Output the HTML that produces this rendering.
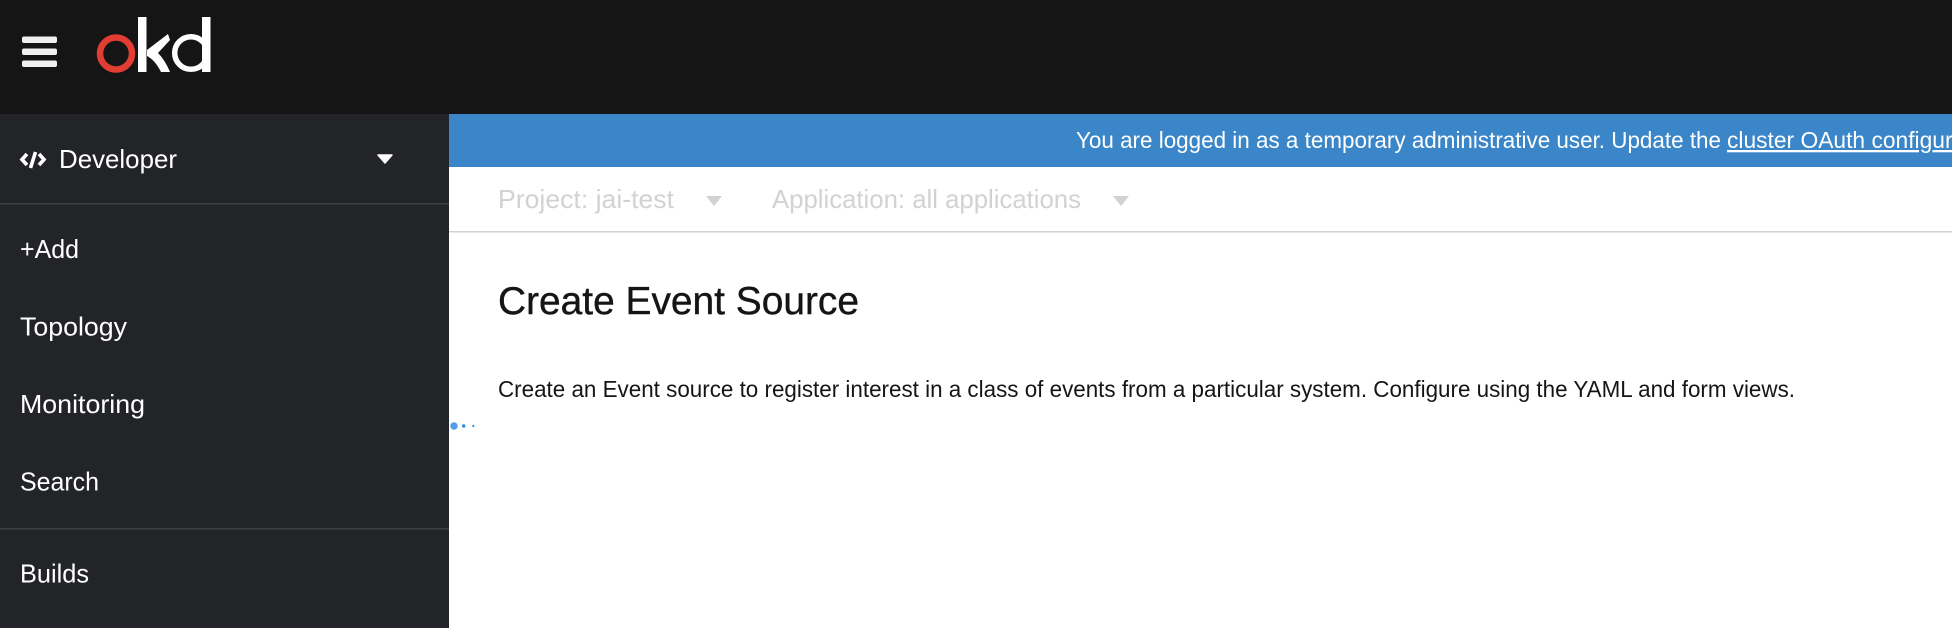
<!DOCTYPE html>
<html lang="en">
<head>
<meta charset="utf-8">
<title>Create Event Source</title>
<style>
html,body{margin:0;padding:0;width:1952px;height:628px;overflow:hidden;background:#fff}
svg{display:block;filter:blur(.35px)}
text{font-family:"Liberation Sans",sans-serif}
.s{font-size:26px;fill:#fff}
.n{font-size:26px;fill:#d2d2d2}
.b{font-size:23px;fill:#fff}
</style>
</head>
<body>
<svg xmlns="http://www.w3.org/2000/svg" width="1952" height="628" viewBox="0 0 1952 628">
  <rect width="1952" height="628" fill="#fff"/>
  <rect width="1952" height="114" fill="#151515"/>
  <rect y="114" width="449" height="514" fill="#232428"/>
  <rect x="449" y="114" width="1503" height="53" fill="#3a86c8"/>
  <rect x="449" y="231" width="1503" height="1.5" fill="#d2d2d2"/>
  <rect y="203" width="449" height="1.5" fill="#3c3f42"/>
  <rect y="528" width="449" height="1.5" fill="#3c3f42"/>

  <!-- hamburger -->
  <g fill="#f0f0f0">
    <rect x="22" y="36.500" width="35" height="6.500" rx="2"/>
    <rect x="22" y="48.500" width="35" height="6.500" rx="2"/>
    <rect x="22" y="60.500" width="35" height="6.500" rx="2"/>
  </g>

  <!-- logo -->
  <circle cx="116" cy="53.500" r="16" fill="none" stroke="#e23d33" stroke-width="6.500"/>
  <rect x="138" y="17" width="8.500" height="55" fill="#fff"/>
  <path d="M147 50 L168 34 L170 40 L158 53 Q165 60 170 72 L161 72 Q155 60 147 56 Z" fill="#fff"/>
  <circle cx="191" cy="53" r="16.300" fill="none" stroke="#fff" stroke-width="5.500"/>
  <rect x="202" y="17" width="8.500" height="55" fill="#fff"/>

  <!-- code icon -->
  <g fill="none" stroke="#fff" stroke-width="3.600">
    <path d="M27 154 L22 159.500 L27 165"/>
    <path d="M35.500 152 L30.500 168"/>
    <path d="M39 154 L44 159.500 L39 165"/>
  </g>
  <text class="s" x="59" y="168" textLength="118" lengthAdjust="spacingAndGlyphs">Developer</text>
  <path d="M378 155 H392 L385 163 Z" fill="#fff" stroke="#fff" stroke-width="1.500" stroke-linejoin="round"/>

  <!-- sidebar -->
  <text class="s" x="20" y="258" textLength="59" lengthAdjust="spacingAndGlyphs">+Add</text>
  <text class="s" x="20" y="335.500" textLength="107" lengthAdjust="spacingAndGlyphs">Topology</text>
  <text class="s" x="20" y="413" textLength="125" lengthAdjust="spacingAndGlyphs">Monitoring</text>
  <text class="s" x="20" y="490.500" textLength="79" lengthAdjust="spacingAndGlyphs">Search</text>
  <text class="s" x="20" y="582.500" textLength="69" lengthAdjust="spacingAndGlyphs">Builds</text>

  <!-- banner -->
  <text class="b" x="1076" y="148" textLength="645" lengthAdjust="spacingAndGlyphs">You are logged in as a temporary administrative user. Update the</text>
  <text class="b" x="1727" y="148" textLength="275" lengthAdjust="spacingAndGlyphs" text-decoration="underline">cluster OAuth configuration</text>

  <!-- context nav -->
  <text class="n" x="498" y="208" textLength="176" lengthAdjust="spacingAndGlyphs">Project: jai-test</text>
  <path d="M706 196 H722 L714 206 Z" fill="#d2d2d2"/>
  <text class="n" x="772" y="208" textLength="309" lengthAdjust="spacingAndGlyphs">Application: all applications</text>
  <path d="M1113 196 H1129 L1121 206 Z" fill="#d2d2d2"/>

  <!-- content -->
  <text x="498" y="314" font-size="39" fill="#151515" stroke="#151515" stroke-width=".4" textLength="361" lengthAdjust="spacingAndGlyphs">Create Event Source</text>
  <text x="498" y="397" font-size="23" fill="#151515" textLength="1297" lengthAdjust="spacingAndGlyphs">Create an Event source to register interest in a class of events from a particular system. Configure using the YAML and form views.</text>

  <!-- loading dots -->
  <circle cx="454" cy="426" r="3.700" fill="#519de9"/>
  <circle cx="463.700" cy="426" r="1.700" fill="#2b8ad8"/>
  <circle cx="473.300" cy="426" r="1.100" fill="#2b8ad8"/>
</svg>
</body>
</html>
